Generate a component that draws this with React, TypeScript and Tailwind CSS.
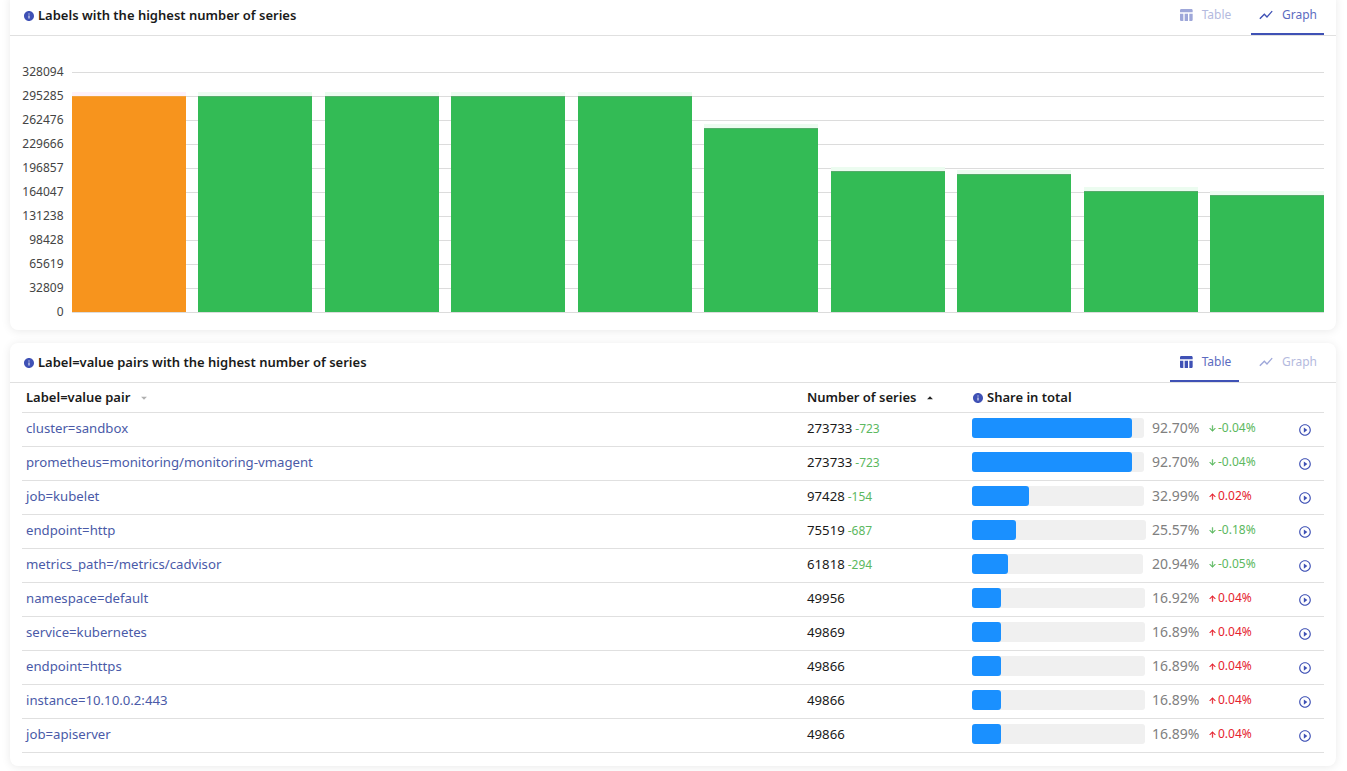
import React from 'react';

const INDIGO = '#3f51b5';

const InfoIcon = () => (
  <svg viewBox="0 0 24 24" className="w-[12px] h-[12px] shrink-0" fill={INDIGO}>
    <path d="M12 2C6.48 2 2 6.48 2 12s4.48 10 10 10 10-4.48 10-10S17.52 2 12 2zm1 15h-2v-6h2v6zm0-8h-2V7h2v2z" />
  </svg>
);

const TableIcon = () => (
  <svg viewBox="0 0 24 24" className="w-[16px] h-[16px]" fill={INDIGO}>
    <path d="M10 10.02h5V21h-5zM17 21h3c1.1 0 2-.9 2-2v-9h-5v11zm3-18H5c-1.1 0-2 .9-2 2v3h19V5c0-1.1-.9-2-2-2zM3 19c0 1.1.9 2 2 2h3V10H3v9z" />
  </svg>
);

const GraphIcon = () => (
  <svg viewBox="0 0 24 24" className="w-[16px] h-[16px]" fill={INDIGO}>
    <path d="M3.5 18.49l6-6.01 4 4L22 6.92l-1.41-1.41-7.09 7.97-4-4L2 16.99z" />
  </svg>
);

const PlayIcon = () => (
  <svg viewBox="0 0 24 24" className="w-[14px] h-[14px]" fill={INDIGO}>
    <path d="M10 16.5l6-4.5-6-4.5v9zM12 2C6.48 2 2 6.48 2 12s4.48 10 10 10 10-4.48 10-10S17.52 2 12 2zm0 18c-4.41 0-8-3.59-8-8s3.59-8 8-8 8 3.59 8 8-3.59 8-8 8z" />
  </svg>
);

const Arrow = ({ up }: { up: boolean }) => (
  <svg viewBox="0 0 24 24" className="w-[9px] h-[9px] shrink-0 mr-[1px]" fill="currentColor" stroke="currentColor" strokeWidth="1">
    <path d={up ? 'M4 12l1.41 1.41L11 7.83V20h2V7.83l5.58 5.59L20 12l-8-8-8 8z' : 'M20 12l-1.41-1.41L13 16.17V4h-2v12.17l-5.58-5.59L4 12l8 8 8-8z'} />
  </svg>
);

const Tabs = ({ active }: { active: 'Table' | 'Graph' }) => (
  <div className="flex h-full">
    <div className={`flex items-center justify-center gap-[8px] w-[69px] h-full border-b-2 ${active === 'Table' ? 'border-[#3f51b5] text-[#5c6bc0]' : 'border-transparent text-[#b4bade]'}`}>
      <span className={active === 'Table' ? '' : 'opacity-50'}><TableIcon /></span>
      <span>Table</span>
    </div>
    <div className={`flex items-center justify-center gap-[8px] w-[73px] ml-[12px] h-full border-b-2 ${active === 'Graph' ? 'border-[#3f51b5] text-[#5c6bc0]' : 'border-transparent text-[#b4bade]'}`}>
      <span className={active === 'Graph' ? '' : 'opacity-50'}><GraphIcon /></span>
      <span>Graph</span>
    </div>
  </div>
);

const CardHeader = ({ title, active }: { title: string; active: 'Table' | 'Graph' }) => (
  <div className="flex items-center justify-between h-[40px] pl-[13px] pr-[12px] border-b border-[#e0e0e0]">
    <div className="flex items-center gap-[3px] font-semibold text-[13px] text-[#1a1a1a]">
      <InfoIcon />
      <span>{title}</span>
    </div>
    <div className="h-full text-[12px]">
      <Tabs active={active} />
    </div>
  </div>
);

const ticks = ['328094', '295285', '262476', '229666', '196857', '164047', '131238', '98428', '65619', '32809', '0'];
const bars = [
  { x: 72, top: 96, fill: '#f7941d', edge: '#f0a33f', halo: '#fdf1fb' },
  { x: 198, top: 96, fill: '#33bb55', edge: '#57ab6c', halo: '#ecfcf0' },
  { x: 325, top: 96, fill: '#33bb55', edge: '#57ab6c', halo: '#ecfcf0' },
  { x: 451, top: 96, fill: '#33bb55', edge: '#57ab6c', halo: '#ecfcf0' },
  { x: 578, top: 96, fill: '#33bb55', edge: '#57ab6c', halo: '#ecfcf0' },
  { x: 704, top: 128, fill: '#33bb55', edge: '#57ab6c', halo: '#ecfcf0' },
  { x: 831, top: 171, fill: '#33bb55', edge: '#57ab6c', halo: '#ecfcf0' },
  { x: 957, top: 174, fill: '#33bb55', edge: '#57ab6c', halo: '#ecfcf0' },
  { x: 1084, top: 191, fill: '#33bb55', edge: '#57ab6c', halo: '#ecfcf0' },
  { x: 1210, top: 195, fill: '#33bb55', edge: '#57ab6c', halo: '#ecfcf0' },
];

const Chart = () => (
  <svg width="1326" height="294" viewBox="10 36 1326 294" className="block">
    {ticks.map((t, i) => {
      const y = 72 + i * 24;
      return (
        <g key={t}>
          <line x1="72" x2="1324" y1={y + 0.5} y2={y + 0.5} stroke="#dcdcdc" />
          <text x="63.5" y={y + 4} textAnchor="end" fontSize="12" fill="#444">{t}</text>
        </g>
      );
    })}
    {bars.map((b) => (
      <g key={b.x}>
        <rect x={b.x} y={b.top - 4} width="114" height="4" fill={b.halo} />
        <rect x={b.x} y={b.top} width="114" height={312 - b.top} fill={b.fill} />
        <rect x={b.x} y={b.top} width="114" height="1" fill={b.edge} />
      </g>
    ))}
  </svg>
);

type Row = { label: string; count: string; delta?: string; share: string; fill: number; track: number; diff: string; up: boolean };

const rows: Row[] = [
  { label: 'cluster=sandbox', count: '273733', delta: '-723', share: '92.70%', fill: 160, track: 172, diff: '-0.04%', up: false },
  { label: 'prometheus=monitoring/monitoring-vmagent', count: '273733', delta: '-723', share: '92.70%', fill: 160, track: 172, diff: '-0.04%', up: false },
  { label: 'job=kubelet', count: '97428', delta: '-154', share: '32.99%', fill: 57, track: 172, diff: '0.02%', up: true },
  { label: 'endpoint=http', count: '75519', delta: '-687', share: '25.57%', fill: 44, track: 174, diff: '-0.18%', up: false },
  { label: 'metrics_path=/metrics/cadvisor', count: '61818', delta: '-294', share: '20.94%', fill: 36, track: 171, diff: '-0.05%', up: false },
  { label: 'namespace=default', count: '49956', share: '16.92%', fill: 29, track: 173, diff: '0.04%', up: true },
  { label: 'service=kubernetes', count: '49869', share: '16.89%', fill: 29, track: 173, diff: '0.04%', up: true },
  { label: 'endpoint=https', count: '49866', share: '16.89%', fill: 29, track: 173, diff: '0.04%', up: true },
  { label: 'instance=10.10.0.2:443', count: '49866', share: '16.89%', fill: 29, track: 173, diff: '0.04%', up: true },
  { label: 'job=apiserver', count: '49866', share: '16.89%', fill: 29, track: 173, diff: '0.04%', up: true },
];

const App: React.FC = () => {
  return (
    <div className="h-[771px] overflow-hidden bg-white pl-[10px] pr-[11px] font-['Noto_Sans',sans-serif]">
      {/* Labels chart */}
      <div className="-mt-[4px] h-[334px] bg-white rounded-b-[8px] shadow-[0_1px_10px_rgba(0,0,0,0.09)]">
        <CardHeader title="Labels with the highest number of series" active="Graph" />
        <Chart />
      </div>

      {/* Label=value pairs table */}
      <div className="mt-[13px] h-[423px] bg-white rounded-[8px] shadow-[0_1px_10px_rgba(0,0,0,0.09)]">
        <CardHeader title="Label=value pairs with the highest number of series" active="Table" />
        <div className="px-[12px]">
          <div className="grid grid-cols-[785px_165px_1fr] h-[30px] items-center border-b border-[#e0e0e0] font-semibold text-[13px] text-[#1a1a1a]">
            <div className="pl-[4px] flex items-center">
              <span>Label=value pair</span>
              <svg viewBox="0 0 24 24" className="w-[14px] h-[14px] ml-[7px]" fill="#b0b0b0"><path d="M7 10l5 5 5-5z" /></svg>
            </div>
            <div className="flex items-center">
              <span>Number of series</span>
              <svg viewBox="0 0 24 24" className="w-[14px] h-[14px] ml-[7px]" fill="#222"><path d="M7 14l5-5 5 5z" /></svg>
            </div>
            <div className="flex items-center gap-[3px]">
              <InfoIcon />
              <span>Share in total</span>
            </div>
          </div>
          {rows.map((r) => (
            <div key={r.label} className="grid grid-cols-[785px_165px_180px_56px_90px_auto] h-[34px] pb-[3px] items-center border-b border-[#e0e0e0] text-[13.2px]">
              <div className="pl-[4px] mt-[2px] text-[#4a5aa8]">{r.label}</div>
              <div className="mt-[2px] text-[#1a1a1a]">
                {r.count}
                {r.delta && <span className="ml-[3px] text-[12px] text-[#5cb860]">{r.delta}</span>}
              </div>
              <div className="h-[20px] rounded-[3px] bg-[#f0f0f0]" style={{ width: r.track }}>
                <div className="h-full rounded-[3px] bg-[#1a90ff]" style={{ width: r.fill }} />
              </div>
              <span className="mb-[2px] text-[14px] text-[#808080]">{r.share}</span>
              <span className={`flex items-center text-[12px] ${r.up ? 'text-[#e5222e]' : 'text-[#5cb860]'}`}>
                <Arrow up={r.up} />
                {r.diff}
              </span>
              <span className="mt-[3px]"><PlayIcon /></span>
            </div>
          ))}
        </div>
      </div>
    </div>
  );
};

export default App;
